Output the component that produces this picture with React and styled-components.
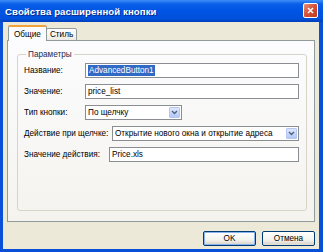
import React from "react";
import styled, { createGlobalStyle } from "styled-components";

const GlobalStyle = createGlobalStyle`
  html, body {
    margin: 0;
    padding: 0;
    background: #fff;
  }
  body {
    font-family: "Liberation Sans", Arial, sans-serif;
    font-size: 8px;
    color: #000;
  }
`;

const Window = styled.div`
  width: 323px;
  height: 252px;
  display: flex;
  flex-direction: column;
  background: #0a4fd8;
  box-sizing: border-box;
  overflow: hidden;
`;

const TitleBar = styled.div`
  height: 22px;
  flex-shrink: 0;
  display: flex;
  align-items: center;
  justify-content: space-between;
  padding: 0 5px 0 5px;
  background: linear-gradient(
    to bottom,
    #3d8ff9 0%,
    #0a5fe8 18%,
    #0054e3 50%,
    #0050dc 85%,
    #003fb8 100%
  );
`;

const Title = styled.div`
  color: #fff;
  font-weight: bold;
  font-size: 9.6px;
  letter-spacing: 0.1px;
  text-shadow: 1px 1px 0 #0a2a8a;
`;

const CloseButton = styled.div`
  width: 13px;
  height: 13px;
  border: 1px solid #fff;
  border-radius: 2px;
  background: linear-gradient(135deg, #e8917a 0%, #d6553a 45%, #c13a1d 100%);
  display: flex;
  align-items: center;
  justify-content: center;
  margin-top: -2px;
`;

const Body = styled.div`
  flex: 1;
  display: flex;
  flex-direction: column;
  margin: 0 4px 3px 3px;
  background: #ece9d8;
  padding: 3px 4px 0 4px;
`;

const TabStrip = styled.div`
  display: flex;
  align-items: flex-end;
  height: 16px;
  padding-left: 1px;
  position: relative;
  z-index: 1;
`;

const Tab = styled.div`
  box-sizing: border-box;
  height: ${(p) => (p.active ? "16px" : "13px")};
  padding: 0 ${(p) => (p.active ? "5px" : "3px")};
  display: flex;
  align-items: center;
  border: 1px solid #919b9c;
  border-bottom: ${(p) => (p.active ? "none" : "1px solid #919b9c")};
  border-top: ${(p) => (p.active ? "2px solid #f0a33a" : "1px solid #919b9c")};
  border-radius: 2px 2px 0 0;
  background: ${(p) =>
    p.active ? "#fcfcfe" : "linear-gradient(to bottom, #ffffff, #ecebe5)"};
  margin-left: ${(p) => (p.active ? "0" : "-1px")};
  font-size: 8.2px;
`;

const Panel = styled.div`
  height: 182px;
  box-sizing: border-box;
  border: 1px solid #919b9c;
  margin-top: -1px;
  background: linear-gradient(to bottom, #fcfcfe, #f4f3ee);
  padding: 9px 7px 10px 9px;
  display: flex;
`;

const Group = styled.fieldset`
  flex: 1;
  margin: 0;
  border: 1px solid #d6d6c8;
  border-radius: 3px;
  padding: 4px 7px 0 6px;
  display: flex;
  flex-direction: column;
  gap: 6px;
`;

const Legend = styled.legend`
  padding: 0 2px;
  margin-left: 2px;
  color: #1e2a52;
  font-size: 8.2px;
`;

const Row = styled.div`
  display: flex;
  align-items: center;
  height: 15px;
`;

const Label = styled.div`
  width: ${(p) => p.width}px;
  flex-shrink: 0;
  font-size: 8.2px;
`;

const Field = styled.div`
  box-sizing: border-box;
  height: ${(p) => p.h || 15}px;
  width: ${(p) => (p.w ? p.w + "px" : "auto")};
  flex: ${(p) => (p.w ? "none" : 1)};
  border: 1px solid #8a8d92;
  background: #fff;
  display: flex;
  align-items: center;
  padding-left: 2px;
  font-size: 8.2px;
  overflow: hidden;
  white-space: nowrap;
`;

const Selected = styled.span`
  background: #316ac5;
  color: #fff;
  padding: 0 1px;
  line-height: 11px;
`;

const FieldText = styled.span`
  flex: 1;
`;

const DropButton = styled.div`
  width: 11px;
  height: 11px;
  margin-right: 1px;
  border-radius: 1px;
  background: linear-gradient(to bottom, #dfe8fd, #b4c8f5);
  border: 1px solid #b4c7f3;
  box-sizing: border-box;
  display: flex;
  align-items: center;
  justify-content: center;
`;

const Footer = styled.div`
  flex: 1;
  display: flex;
  justify-content: flex-end;
  align-items: flex-start;
  padding-top: 9px;
  padding-right: 0;
  gap: 6px;
`;

const Button = styled.div`
  box-sizing: border-box;
  width: 53px;
  height: 15px;
  border: 1px solid #003c74;
  border-radius: 2px;
  background: linear-gradient(to bottom, #ffffff 0%, #f4f3ee 60%, #d6d0c5 100%);
  box-shadow: ${(p) =>
    p.primary ? "inset 0 0 0 1px #8ab4f0" : "inset 0 -1px 0 #e3e0d6"};
  display: flex;
  align-items: center;
  justify-content: center;
  font-size: 8.2px;
`;

function Chevron() {
  return (
    <svg width="7" height="5" viewBox="0 0 7 5">
      <path d="M1 1 L3.5 3.5 L6 1" fill="none" stroke="#4d6185" strokeWidth="1.4" />
    </svg>
  );
}

function Select({ text, w }) {
  return (
    <Field w={w}>
      <FieldText>{text}</FieldText>
      <DropButton>
        <Chevron />
      </DropButton>
    </Field>
  );
}

export default function App() {
  return (
    <>
      <GlobalStyle />
      <Window>
        <TitleBar>
          <Title>Свойства расширенной кнопки</Title>
          <CloseButton>
            <svg width="7" height="7" viewBox="0 0 7 7">
              <path d="M1 1 L6 6 M6 1 L1 6" stroke="#fff" strokeWidth="1.5" />
            </svg>
          </CloseButton>
        </TitleBar>
        <Body>
          <TabStrip>
            <Tab active>Общие</Tab>
            <Tab>Стиль</Tab>
          </TabStrip>
          <Panel>
            <Group>
              <Legend>Параметры</Legend>
              <Row>
                <Label width={61}>Название:</Label>
                <Field>
                  <Selected>AdvancedButton1</Selected>
                </Field>
              </Row>
              <Row>
                <Label width={61}>Значение:</Label>
                <Field>price_list</Field>
              </Row>
              <Row>
                <Label width={61}>Тип кнопки:</Label>
                <Select text="По щелчку" w={97} />
              </Row>
              <Row>
                <Label width={88}>Действие при щелчке:</Label>
                <Select text="Открытие нового окна и открытие адреса" />
              </Row>
              <Row>
                <Label width={85}>Значение действия:</Label>
                <Field>Price.xls</Field>
              </Row>
            </Group>
          </Panel>
          <Footer>
            <Button primary>OK</Button>
            <Button>Отмена</Button>
          </Footer>
        </Body>
      </Window>
    </>
  );
}
